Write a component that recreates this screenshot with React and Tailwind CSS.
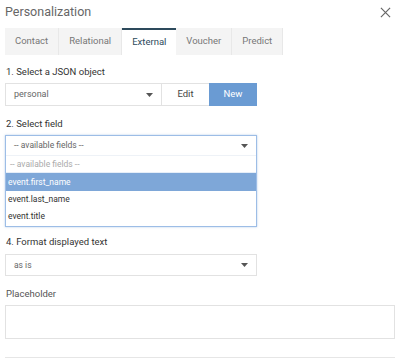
import React from 'react'

// Personalization dialog — External tab with the field dropdown open
const tabs = ['Contact', 'Relational', 'External', 'Voucher', 'Predict']
const fields = ['event.first_name', 'event.last_name', 'event.title']

function Caret() {
  return (
    <svg width="7" height="4" viewBox="0 0 7 4" className="fill-[#555]">
      <path d="M0 0h7L3.5 4z" />
    </svg>
  )
}

export default function App() {
  return (
    <div className="w-[400px] h-[363px] overflow-hidden bg-white font-['Roboto',sans-serif] text-[#333]">
      {/* Header */}
      <div className="flex items-center justify-between h-[25px] pl-[5px] pr-[9px]">
        <span className="text-[12.5px] text-[#666]">Personalization</span>
        <svg width="11" height="11" viewBox="0 0 12 12" className="stroke-[#666]" strokeWidth="1.3">
          <path d="M1 1l10 10M11 1L1 11" />
        </svg>
      </div>

      {/* Tabs */}
      <div className="flex h-[27px] ml-[5px] mt-[3px]">
        {tabs.map((t) => {
          const active = t === 'External'
          return (
            <div
              key={t}
              className={
                active
                  ? 'flex items-center px-[10px] bg-white border-t-2 border-[#2d4a5c] text-[9.5px] text-[#2d4a5c]'
                  : 'flex items-center px-[10px] bg-[#f4f4f4] border-r border-[#e8e8e8] text-[9.5px] text-[#777]'
              }
            >
              {t}
            </div>
          )
        })}
      </div>

      <div className="px-[5px]">
        {/* 1. JSON object */}
        <div className="mt-[10px] leading-[14px] text-[9.5px] pl-[1px]">1. Select a JSON object</div>
        <div className="flex mt-[4px] h-[23px] w-[252px]">
          <div className="flex items-center justify-between flex-1 border border-[#e2e2e2] pl-[8px] pr-[8px] text-[9px] text-[#666]">
            <span>personal</span>
            <Caret />
          </div>
          <div className="flex items-center justify-center w-[47px] border-y border-[#e2e2e2] text-[9.5px] text-[#444]">Edit</div>
          <div className="flex items-center justify-center w-[48px] bg-[#6a9bd3] text-[9.5px] text-white">New</div>
        </div>

        {/* 2. Field */}
        <div className="mt-[11px] leading-[14px] text-[9.5px] pl-[1px]">2. Select field</div>
        <div className="mt-[4px] w-[252px] pb-[1px] border border-[#9dbde6] shadow-[0_0_2px_rgba(110,155,210,0.5)]">
          <div className="flex items-center justify-between h-[20px] pl-[8px] pr-[8px] text-[8.5px] text-[#666] border-b border-[#eef2f7]">
            <span>-- available fields --</span>
            <Caret />
          </div>
          <div className="flex items-center h-[17px] pl-[4px] text-[8.5px] text-[#aaa] border-b border-[#e6eef8]">-- available fields --</div>
          {fields.map((f, i) => (
            <div
              key={f}
              className={
                i === 0
                  ? 'flex items-center h-[18px] pl-[2px] text-[8.5px] bg-[#7ea7d8] text-white'
                  : 'flex items-center h-[17px] pl-[2px] text-[8.5px] text-[#333]'
              }
            >
              {f}
            </div>
          ))}
        </div>

        {/* 4. Format */}
        <div className="mt-[8px] leading-[14px] text-[9.5px] pl-[1px]">4. Format displayed text</div>
        <div className="flex items-center justify-between mt-[5px] h-[22px] w-[252px] border border-[#e2e2e2] pl-[8px] pr-[8px] text-[8.5px] text-[#666]">
          <span>as is</span>
          <Caret />
        </div>

        {/* Placeholder */}
        <div className="mt-[11px] leading-[14px] text-[9.5px] text-[#555] pl-[1px]">Placeholder</div>
        <div className="mt-[4px] h-[34px] w-[390px] border border-[#e2e2e2]" />

        <div className="mt-[18px] w-[390px] border-t border-[#e6e6e6]" />
      </div>
    </div>
  )
}
